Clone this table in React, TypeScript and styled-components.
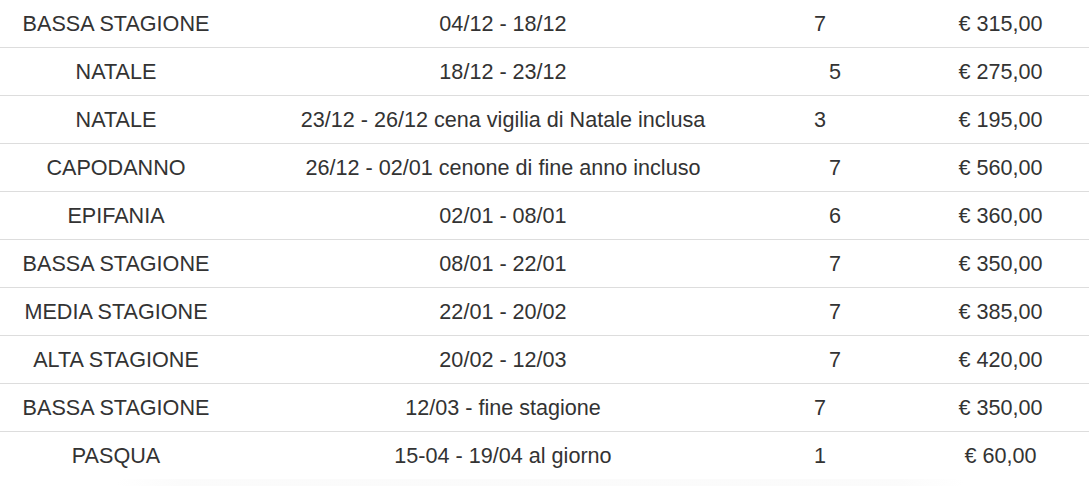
import React from "react";
import styled, { createGlobalStyle } from "styled-components";

const Global = createGlobalStyle`
  html, body { margin: 0; padding: 0; background: #fff; }
  body { font-family: "Liberation Sans", Arial, Helvetica, sans-serif; color: #333; }
`;

const Table = styled.div`
  display: grid;
  grid-template-columns: 232px 542px 138px 177px;
  width: 1089px;
`;

const Row = styled.div<{ $first?: boolean }>`
  display: contents;
  & > div {
    border-top: ${(p) => (p.$first ? "none" : "1px solid #dddddd")};
    height: 47px;
  }
`;

const Cell = styled.div<{ $align?: "center" | "left"; $pad?: number }>`
  display: flex;
  align-items: center;
  justify-content: ${(p) => (p.$align === "left" ? "flex-start" : "center")};
  padding-left: ${(p) => p.$pad ?? 0}px;
  font-size: 21.6px;
  line-height: 1;
  white-space: nowrap;
`;

const Shade = styled.div`
  margin: 0 124px 0 115px;
  height: 8px;
  background: linear-gradient(to right, rgba(248,248,248,0), #f9f9f9 8%, #f9f9f9 92%, rgba(248,248,248,0));
  border-radius: 8px 8px 0 0;
  opacity: 0.7;
`;

type R = { name: string; period: string; nights: string; shift: boolean; price: string };

const rows: R[] = [
  { name: "BASSA STAGIONE", period: "04/12 - 18/12", nights: "7", shift: false, price: "€ 315,00" },
  { name: "NATALE", period: "18/12 - 23/12", nights: "5", shift: true, price: "€ 275,00" },
  { name: "NATALE", period: "23/12 - 26/12 cena vigilia di Natale inclusa", nights: "3", shift: false, price: "€ 195,00" },
  { name: "CAPODANNO", period: "26/12 - 02/01 cenone di fine anno incluso", nights: "7", shift: true, price: "€ 560,00" },
  { name: "EPIFANIA", period: "02/01 - 08/01", nights: "6", shift: true, price: "€ 360,00" },
  { name: "BASSA STAGIONE", period: "08/01 - 22/01", nights: "7", shift: true, price: "€ 350,00" },
  { name: "MEDIA STAGIONE", period: "22/01 - 20/02", nights: "7", shift: true, price: "€ 385,00" },
  { name: "ALTA STAGIONE", period: "20/02 - 12/03", nights: "7", shift: true, price: "€ 420,00" },
  { name: "BASSA STAGIONE", period: "12/03 - fine stagione", nights: "7", shift: false, price: "€ 350,00" },
  { name: "PASQUA", period: "15-04 - 19/04 al giorno", nights: "1", shift: false, price: "€ 60,00" },
];

export default function App() {
  return (
    <>
      <Global />
      <Table>
        {rows.map((r, i) => (
          <Row key={i} $first={i === 0}>
            <Cell>{r.name}</Cell>
            <Cell>{r.period}</Cell>
            <Cell $align="left" $pad={r.shift ? 55 : 40}>{r.nights}</Cell>
            <Cell>{r.price}</Cell>
          </Row>
        ))}
      </Table>
      <Shade />
    </>
  );
}
